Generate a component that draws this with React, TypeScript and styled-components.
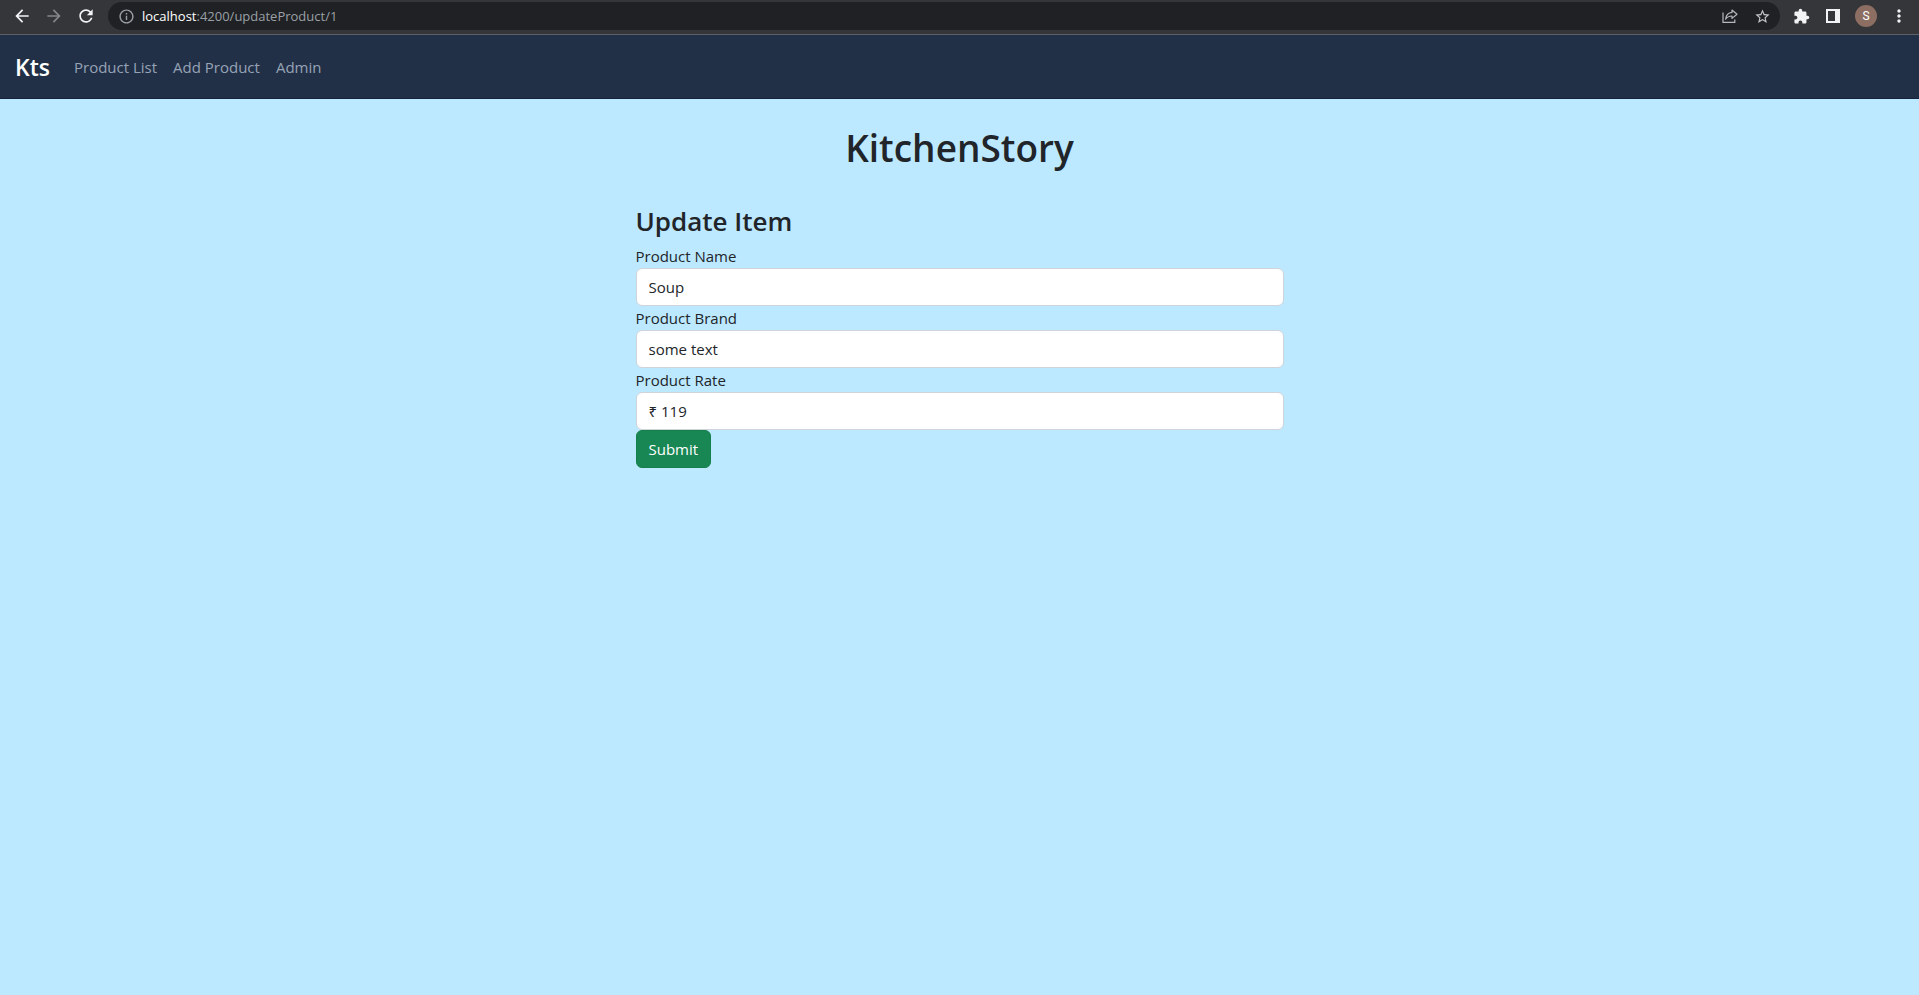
import React, { useState } from "react";
import styled, { createGlobalStyle } from "styled-components";
import {
  MdArrowBack,
  MdArrowForward,
  MdExtension,
  MdInfoOutline,
  MdMoreVert,
  MdRefresh,
  MdStarBorder,
} from "react-icons/md";

const GlobalStyle = createGlobalStyle`
  *, *::before, *::after { box-sizing: border-box; }
  body {
    margin: 0;
    background: #bce9ff;
    color: #212529;
    font-family: "Open Sans", "Noto Sans", sans-serif;
    font-size: 15px;
    line-height: 24px;
  }
`;

const BrowserBar = styled.header`
  display: flex;
  align-items: center;
  height: 35px;
  padding: 0 10px 2px 12px;
  background: #35363a;
  border-bottom: 1px solid #5f6167;
`;

const BrowserActions = styled.div<{ $gap: number }>`
  display: flex;
  align-items: center;
  gap: ${({ $gap }) => $gap}px;
`;

const IconButton = styled.button<{ $color?: string }>`
  display: flex;
  align-items: center;
  justify-content: center;
  width: 20px;
  height: 20px;
  padding: 0;
  border: 0;
  background: none;
  color: ${({ $color }) => $color ?? "#f1f3f4"};
  cursor: pointer;
`;

const AddressBar = styled.div`
  display: flex;
  flex: 1;
  align-items: center;
  gap: 6px;
  height: 28px;
  margin: 0 11px 0 12px;
  padding: 0 8px;
  border-radius: 14px;
  background: #202124;
`;

const Address = styled.div`
  flex: 1;
  color: #9aa0a6;
  font-size: 13px;
  line-height: 20px;
`;

const Host = styled.span`
  color: #ffffff;
`;

const Avatar = styled.button`
  width: 22px;
  height: 22px;
  padding: 0;
  border: 0;
  border-radius: 50%;
  background: #8d6e63;
  color: #ffffff;
  font: 12px/22px Roboto, sans-serif;
`;

const Navbar = styled.nav`
  display: flex;
  align-items: center;
  height: 64px;
  padding: 0 15px;
  background: #223047;
  border-bottom: 1px solid #15233a;
`;

const Brand = styled.a`
  margin-right: 24px;
  color: #ffffff;
  font-size: 23px;
  font-weight: 600;
  line-height: 36px;
  text-decoration: none;
`;

const NavList = styled.ul`
  display: flex;
  gap: 16px;
  margin: 0;
  padding: 0;
  list-style: none;
`;

const NavLink = styled.a`
  color: #96a3b6;
  text-decoration: none;
`;

const Main = styled.main`
  display: flex;
  flex-direction: column;
  align-items: center;
  padding: 25px 12px;
`;

const PageTitle = styled.h1`
  margin: 0 0 32px;
  font-size: 37px;
  font-weight: 600;
  line-height: 48px;
`;

const ProductForm = styled.form`
  display: flex;
  flex-direction: column;
  width: 100%;
  max-width: 648px;
`;

const FormTitle = styled.h3`
  margin: 0 0 6px;
  font-size: 26px;
  font-weight: 600;
  line-height: 34px;
`;

const TextInput = styled.input`
  width: 100%;
  height: 38px;
  padding: 6px 12px;
  border: 1px solid #ced4da;
  border-radius: 6px;
  background: #ffffff;
  color: #212529;
  font: inherit;
`;

const SubmitButton = styled.button`
  align-self: flex-start;
  height: 38px;
  padding: 6px 12px;
  border: 1px solid #15804b;
  border-radius: 6px;
  background: #198754;
  color: #ffffff;
  font: inherit;
  cursor: pointer;
`;

const ShareIcon = () => (
  <svg width="16" height="16" viewBox="0 0 16 16" fill="none" stroke="currentColor" strokeWidth="1.2">
    <path d="M1 4.5V14.3H12.8V11.6" />
    <path d="M10 2L15 6.2L10 10.4V8C7 8 4.9 8.9 3.6 11.2C4 7.5 6 4.8 10 4.4Z" strokeLinejoin="round" />
  </svg>
);

const SidePanelIcon = () => (
  <svg width="14" height="14" viewBox="0 0 14 14">
    <path fill="currentColor" fillRule="evenodd" d="M0 0H14V14H0ZM2 2V12H9V2Z" />
  </svg>
);

const navItems = ["Product List", "Add Product", "Admin"];

const fields = [
  { id: "name", label: "Product Name", initial: "Soup" },
  { id: "brand", label: "Product Brand", initial: "some text" },
  { id: "rate", label: "Product Rate", initial: "₹ 119" },
];

export default function App() {
  const [values, setValues] = useState<Record<string, string>>(
    Object.fromEntries(fields.map((f) => [f.id, f.initial])),
  );

  return (
    <>
      <GlobalStyle />
      <BrowserBar>
        <BrowserActions $gap={12}>
          <IconButton aria-label="Back"><MdArrowBack size={20} /></IconButton>
          <IconButton aria-label="Forward" $color="#85868a"><MdArrowForward size={20} /></IconButton>
          <IconButton aria-label="Reload"><MdRefresh size={20} /></IconButton>
        </BrowserActions>
        <AddressBar>
          <IconButton aria-label="Site information" $color="#9aa0a6"><MdInfoOutline size={17} /></IconButton>
          <Address><Host>localhost</Host>:4200/updateProduct/1</Address>
          <BrowserActions $gap={12}>
            <IconButton aria-label="Share" $color="#b4b8bc"><ShareIcon /></IconButton>
            <IconButton aria-label="Bookmark" $color="#c4c7ca"><MdStarBorder size={17} /></IconButton>
          </BrowserActions>
        </AddressBar>
        <BrowserActions $gap={12}>
          <IconButton aria-label="Extensions"><MdExtension size={17} /></IconButton>
          <IconButton aria-label="Side panel"><SidePanelIcon /></IconButton>
          <Avatar aria-label="Profile">S</Avatar>
          <IconButton aria-label="Menu"><MdMoreVert size={20} /></IconButton>
        </BrowserActions>
      </BrowserBar>
      <Navbar>
        <Brand href="#">Kts</Brand>
        <NavList>
          {navItems.map((item) => (
            <li key={item}><NavLink href="#">{item}</NavLink></li>
          ))}
        </NavList>
      </Navbar>
      <Main>
        <PageTitle>KitchenStory</PageTitle>
        <ProductForm onSubmit={(e) => e.preventDefault()}>
          <FormTitle>Update Item</FormTitle>
          {fields.map(({ id, label }) => (
            <React.Fragment key={id}>
              <label htmlFor={id}>{label}</label>
              <TextInput
                id={id}
                value={values[id]}
                onChange={(e) => setValues({ ...values, [id]: e.target.value })}
              />
            </React.Fragment>
          ))}
          <SubmitButton type="submit">Submit</SubmitButton>
        </ProductForm>
      </Main>
    </>
  );
}
